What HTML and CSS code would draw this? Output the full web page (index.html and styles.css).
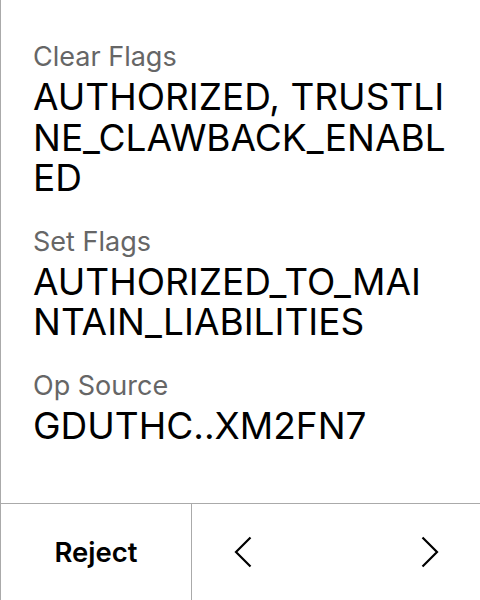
FILE: index.html
```html
<!DOCTYPE html>
<html>
<head>
<meta charset="utf-8">
<link rel="stylesheet" href="styles.css">
</head>
<body>
<div class="screen">
  <div class="content">
    <div class="field">
      <div class="label">Clear Flags</div>
      <div class="value">AUTHORIZED, TRUSTLINE_CLAWBACK_ENABLED</div>
    </div>
    <div class="field">
      <div class="label">Set Flags</div>
      <div class="value">AUTHORIZED_TO_MAINTAIN_LIABILITIES</div>
    </div>
    <div class="field">
      <div class="label">Op Source</div>
      <div class="value">GDUTHC..XM2FN7</div>
    </div>
  </div>
  <div class="actions">
    <div class="reject">Reject</div>
    <div class="nav">
      <svg class="chev" width="18" height="32" viewBox="0 0 18 32"><polyline points="16.5,1.5 2,16 16.5,30.5" fill="none" stroke="#000" stroke-width="2.2"/></svg>
      <svg class="chev" width="18" height="32" viewBox="0 0 18 32"><polyline points="1.5,1.5 16,16 1.5,30.5" fill="none" stroke="#000" stroke-width="2.2"/></svg>
    </div>
  </div>
</div>
</body>
</html>
```
FILE: styles.css
```css
* { box-sizing: border-box; }
html, body { margin: 0; padding: 0; background: #fff; }
body { font-family: Inter, "Noto Sans", sans-serif; color: #000; }
.screen {
  width: 480px;
  height: 600px;
  border-left: 1px solid #aaa;
  display: flex;
  flex-direction: column;
}
.content {
  flex: 1;
  padding: 40px 34px 0 32px;
  display: flex;
  flex-direction: column;
  gap: 26px;
}
.label {
  font-size: 27px;
  line-height: 33px;
  color: #666;
  margin-bottom: 4px;
}
.value {
  font-size: 37px;
  line-height: 40.5px;
  word-break: break-all;
}
.actions {
  height: 97px;
  border-top: 1px solid #aaa;
  display: flex;
}
.reject {
  width: 191px;
  border-right: 1px solid #aaa;
  display: flex;
  align-items: center;
  justify-content: center;
  font-size: 27.5px;
  font-weight: 600;
}
.nav {
  flex: 1;
  display: flex;
  align-items: center;
  justify-content: space-between;
  padding: 0 41px 0 42px;
}
.chev { display: block; }
```
